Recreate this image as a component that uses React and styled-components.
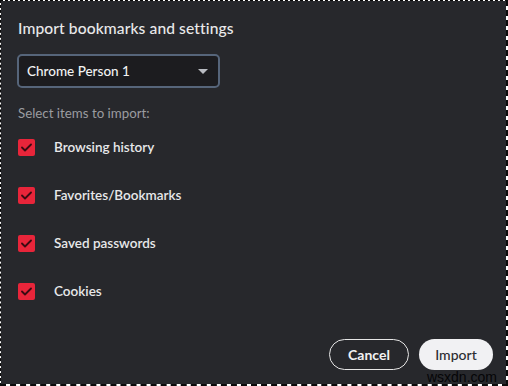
import React from 'react';
import styled, { createGlobalStyle } from 'styled-components';

const Global = createGlobalStyle`
  html, body {
    margin: 0;
    padding: 0;
    background: #ffffff;
  }
  body {
    font-family: Lato, "Noto Sans", sans-serif;
  }
`

const Frame = styled.div`
  position: relative;
  width: 508px;
  height: 386px;
  box-sizing: border-box;
  background: #27282c;
  background-clip: padding-box;
  border-style: dashed;
  border-color: #0c0c0c;
  border-width: 1px 2px 2px 1px;
  display: flex;
  flex-direction: column;
  padding: 18px 13px 13px 17px;
`

const Title = styled.h1`
  margin: 0;
  font-size: 15.6px;
  font-weight: 500;
  color: #e9e9ea;
  letter-spacing: 0.1px;
`

const Select = styled.div`
  margin-top: 17px;
  margin-left: -1px;
  width: 203px;
  height: 34px;
  box-sizing: border-box;
  border: 2px solid #56657a;
  border-radius: 5px;
  background: #1c1c1f;
  display: flex;
  align-items: center;
  justify-content: space-between;
  padding: 0 10px 0 8px;
  color: #f2f2f2;
  font-size: 13.5px;
  font-weight: 500;
`

const Caret = styled.span`
  width: 0;
  height: 0;
  border-left: 5px solid transparent;
  border-right: 5px solid transparent;
  border-top: 5px solid #b9bcc2;
`

const Hint = styled.div`
  margin-top: 17px;
  font-size: 13.3px;
  color: #9b9ca0;
`

const List = styled.div`
  margin-top: 17px;
  display: flex;
  flex-direction: column;
  gap: 30px;
`

const Row = styled.label`
  display: flex;
  align-items: center;
  gap: 19px;
  height: 18px;
  color: #e8e8ea;
  font-size: 13.5px;
  font-weight: 600;
`

const Box = styled.span`
  width: 17px;
  height: 17px;
  border-radius: 2px;
  background: #e8253a;
  display: flex;
  align-items: center;
  justify-content: center;
`

const Footer = styled.div`
  margin-top: auto;
  display: flex;
  justify-content: flex-end;
  gap: 10px;
  padding-bottom: 1px;
`

const Button = styled.button`
  height: 31px;
  box-sizing: border-box;
  border-radius: 16px;
  font-family: Lato, "Noto Sans", sans-serif;
  font-size: 14px;
  padding: 0;
  width: ${(p) => p.w}px;
  border: ${(p) => (p.primary ? 'none' : '1.5px solid #e6e6e6')};
  background: ${(p) => (p.primary ? '#f1f1f3' : 'transparent')};
  color: ${(p) => (p.primary ? '#2c2d31' : '#f2f2f2')};
  font-weight: ${(p) => (p.primary ? 500 : 700)};
`

const Watermark = styled.span`
  position: absolute;
  right: 9px;
  bottom: 0;
  font-family: "Liberation Sans", Arial, sans-serif;
  font-size: 14px;
  line-height: 14px;
  color: #050507;
`

const items = ['Browsing history', 'Favorites/Bookmarks', 'Saved passwords', 'Cookies']

const Check = () => (
  <svg width="11" height="9" viewBox="0 0 11 9">
    <path d="M1 4.5 L4 7.5 L10 1.5" fill="none" stroke="#3a0b12" strokeWidth="1.8" strokeLinecap="round" strokeLinejoin="round" />
  </svg>
)

export default function App() {
  return (
    <Frame>
      <Global />
      <Title>Import bookmarks and settings</Title>
      <Select>
        <span>Chrome Person 1</span>
        <Caret />
      </Select>
      <Hint>Select items to import:</Hint>
      <List>
        {items.map((t) => (
          <Row key={t}>
            <Box><Check /></Box>
            {t}
          </Row>
        ))}
      </List>
      <Footer>
        <Button w={80}>Cancel</Button>
        <Button primary w={74}>Import</Button>
      </Footer>
      <Watermark>wsxdn.com</Watermark>
    </Frame>
  )
}
